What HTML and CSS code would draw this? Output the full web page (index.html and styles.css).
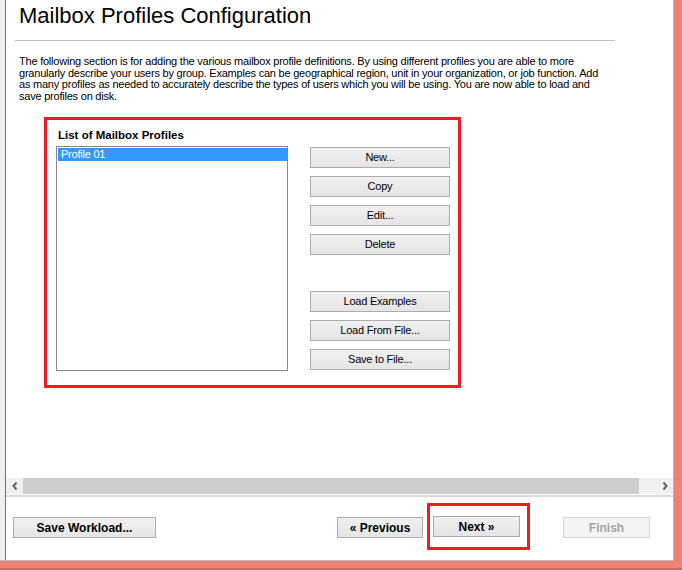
FILE: index.html
```html
<!DOCTYPE html>
<html lang="en">
<head>
  <meta charset="UTF-8">
  <meta name="viewport" content="width=device-width, initial-scale=1.0">
  <title>Mailbox Profiles Configuration</title>
  <link rel="stylesheet" href="styles.css">
</head>
<body>
  <div class="window">
    <div class="splitter"></div>
    <div class="main">
      <div class="page">
        <h1>Mailbox Profiles Configuration</h1>
        <hr>
        <p class="intro">
          The following section is for adding the various mailbox profile definitions. By using different profiles you are able to more<br>
          granularly describe your users by group. Examples can be geographical region, unit in your organization, or job function. Add<br>
          as many profiles as needed to accurately describe the types of users which you will be using. You are now able to load and<br>
          save profiles on disk.
        </p>

        <div class="mark profiles">
          <div class="group-title">List of Mailbox Profiles</div>
          <div class="group-body">
            <div class="listbox">
              <div class="list-item selected">Profile 01</div>
            </div>
            <div class="actions">
              <button class="btn">New...</button>
              <button class="btn">Copy</button>
              <button class="btn">Edit...</button>
              <button class="btn">Delete</button>
              <div class="spacer"></div>
              <button class="btn">Load Examples</button>
              <button class="btn">Load From File...</button>
              <button class="btn">Save to File...</button>
            </div>
          </div>
        </div>
      </div>

      <!-- horizontal scrollbar of the wizard page -->
      <div class="hscroll">
        <span class="scroll-btn">
          <svg width="6" height="8" viewBox="0 0 6 8"><path d="M4.5 0.5 L1.5 4 L4.5 7.5" fill="none" stroke="#606060" stroke-width="2"/></svg>
        </span>
        <span class="thumb"></span>
        <span class="track"></span>
        <span class="scroll-btn">
          <svg width="6" height="8" viewBox="0 0 6 8"><path d="M1.5 0.5 L4.5 4 L1.5 7.5" fill="none" stroke="#606060" stroke-width="2"/></svg>
        </span>
      </div>

      <div class="footer">
        <button class="btn btn-bold save">Save Workload...</button>
        <button class="btn btn-bold prev">&laquo; Previous</button>
        <div class="mark next-mark">
          <button class="btn btn-bold">Next &raquo;</button>
        </div>
        <button class="btn btn-bold finish" disabled>Finish</button>
      </div>
    </div>
  </div>
  <div class="taskbar"></div>
</body>
</html>
```

FILE: styles.css
```css
body {
  margin: 0;
  background-color: #f08275;
  font-family: 'Liberation Sans', Arial, sans-serif;
  color: #000;
}
.window {
  display: flex;
  width: 673px;
  height: 560px;
  background-color: #fff;
  border-right: 1px solid #b9b9b9;
  border-bottom: 1px solid #b9b9b9;
}
.splitter {
  width: 5px;
  background-color: #f0f0f0;
  border-right: 1px solid #707070;
}
.main {
  flex: 1;
  display: flex;
  flex-direction: column;
}
.page {
  height: 478px;
  padding-left: 13px;
  overflow: hidden;
}
h1 {
  margin: 0;
  padding-top: 3px;
  font-size: 22px;
  font-weight: 400;
  line-height: 26px;
}
hr {
  margin: 11px 0 0 -4px;
  width: 600px;
  height: 0;
  border: none;
  border-top: 1px solid #c0c0c0;
}
.intro {
  margin: 15px 0 0;
  font-size: 11px;
  letter-spacing: -0.22px;
  line-height: 11.67px;
  white-space: nowrap;
}
.mark {
  border: 3px solid #ed1c24;
}
.profiles {
  box-sizing: border-box;
  width: 417px;
  margin: 14px 0 0 25px;
  padding: 8px 8px 14px 9px;
}
.group-title {
  padding-left: 2px;
  margin-bottom: 4px;
  font-size: 11.5px;
  font-weight: 700;
  line-height: 14px;
}
.group-body {
  display: flex;
  align-items: flex-start;
}
.listbox {
  box-sizing: border-box;
  width: 232px;
  height: 225px;
  padding: 1px 0 0 1px;
  border: 1px solid #828790;
}
.list-item {
  height: 13px;
  padding-left: 3px;
  font-size: 11px;
  letter-spacing: -0.22px;
  line-height: 13px;
}
.list-item.selected {
  background-color: #3399ff;
  color: #fff;
}
.actions {
  display: flex;
  flex-direction: column;
  gap: 8px;
  width: 140px;
  margin: 1px 0 0 22px;
}
.actions .spacer {
  height: 20px;
}
.btn {
  box-sizing: border-box;
  height: 21px;
  padding: 0;
  border: 1px solid #acacac;
  background: linear-gradient(#f0f0f0, #e5e5e5);
  font-family: inherit;
  font-size: 11px;
  letter-spacing: -0.22px;
  color: #000;
}
.btn-bold {
  width: 86px;
  font-size: 12px;
  font-weight: 700;
  letter-spacing: 0;
}
.btn:disabled {
  border-color: #d5d5d5;
  background: #f4f4f4;
  color: #a3a3a3;
}
.hscroll {
  display: flex;
  height: 16px;
  background-color: #f0f0f0;
}
.scroll-btn {
  width: 17px;
  display: flex;
  align-items: center;
  justify-content: center;
}
.hscroll .thumb {
  width: 616px;
  background-color: #cdcdcd;
}
.hscroll .track {
  flex: 1;
}
.footer {
  flex: 1;
  display: flex;
  align-items: flex-start;
  margin-top: 1px;
  padding: 20px 23px 0 7px;
  border-top: 2px solid #d9d9d9;
}
.footer .save {
  width: 143px;
}
.footer .prev {
  margin-left: auto;
}
.next-mark {
  margin: -14px 33px 0 4px;
  padding: 10px 7px 10px 3px;
}
.next-mark .btn {
  width: 87px;
}
.footer .finish {
  width: 87px;
}
.taskbar {
  height: 2px;
  margin-top: 7px;
  background-color: #c96a60;
}
```
